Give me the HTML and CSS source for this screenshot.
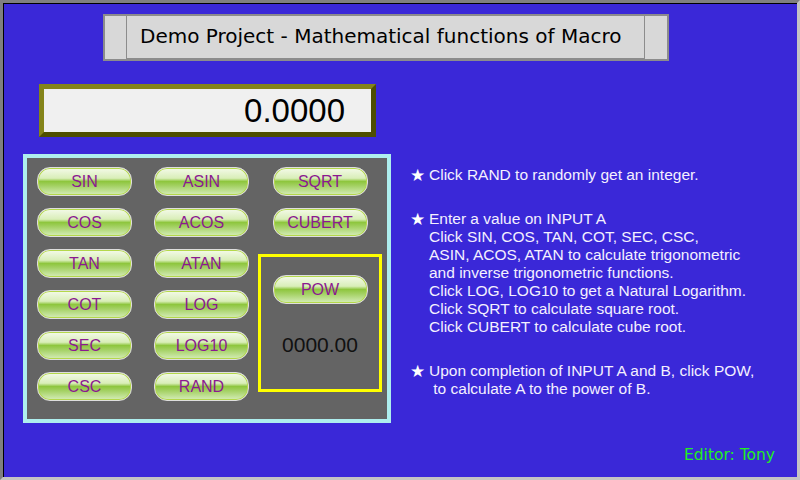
FILE: index.html
```html
<!DOCTYPE html>
<html>
<head>
<title>Demo Project - Mathematical functions of Macro</title>
<link rel="stylesheet" href="styles.css">
</head>
<body>
<div class="screen">
	<div class="title"><div class="title-label">Demo Project - Mathematical functions of Macro</div></div>
	<div class="display">0.0000</div>
	<div class="body">
		<div class="panel">
			<div class="keys">
				<div class="btn">SIN</div><div class="btn">ASIN</div>
				<div class="btn">COS</div><div class="btn">ACOS</div>
				<div class="btn">TAN</div><div class="btn">ATAN</div>
				<div class="btn">COT</div><div class="btn">LOG</div>
				<div class="btn">SEC</div><div class="btn">LOG10</div>
				<div class="btn">CSC</div><div class="btn">RAND</div>
			</div>
			<div class="side">
				<div class="btn">SQRT</div>
				<div class="btn">CUBERT</div>
				<div class="pow-box">
					<div class="btn">POW</div>
					<div class="pow-result">0000.00</div>
				</div>
			</div>
		</div>
		<div class="notes">
			<div class="note"><span class="star">★</span><div>Click RAND to randomly get an integer.</div></div>
			<div class="note"><span class="star">★</span><div>Enter a value on INPUT A<br>Click SIN, COS, TAN, COT, SEC, CSC,<br>ASIN, ACOS, ATAN to calculate trigonometric<br>and inverse trigonometric functions.<br>Click LOG, LOG10 to get a Natural Logarithm.<br>Click SQRT to calculate square root.<br>Click CUBERT to calculate cube root.</div></div>
			<div class="note"><span class="star">★</span><div>Upon completion of INPUT A and B, click POW,<br>&nbsp;to calculate A to the power of B.</div></div>
		</div>
	</div>
	<div class="footer">Editor: Tony</div>
</div>
</body>
</html>
```

FILE: styles.css
```css
body { margin: 0; font-family: "Liberation Sans", Arial, sans-serif; }
.screen { width: 800px; height: 480px; box-sizing: border-box; background: #3a28d8; border: 3px solid; border-color: #808080 #c4c4c4 #c4c4c4 #808080; box-shadow: inset 1px 1px 0 #000; display: flex; flex-direction: column; }

.title { align-self: flex-start; margin: 11px 0 0 100px; width: 519px; height: 43px; background: #d8d8d8; border: 2px solid #8c8c8c; padding: 0 22px 0 21px; display: flex; }
.title-label { flex: 1; border: 1px solid #8c8c8c; border-top: 0; padding-left: 13px; font-family: "Comic Sans MS", "DejaVu Sans", sans-serif; font-size: 20px; line-height: 41px; color: #000; white-space: nowrap; }

.display { align-self: flex-start; margin: 23px 0 0 36px; width: 301px; height: 43px; padding-right: 26px; background: #f0f0f0; border: 5px solid; border-color: #84841a #4e4e00 #4e4e00 #84841a; text-align: right; font-size: 33px; line-height: 43px; color: #000; }

.body { display: flex; margin: 17px 0 0 20px; }
.panel { display: flex; width: 350px; height: 252px; padding: 9px 0 0 10px; background: #646464; border: 4px solid #aeeeee; }
.keys { display: grid; grid-template-columns: 95px 95px; grid-auto-rows: 29px; gap: 12px 22px; align-content: start; }
.side { display: flex; flex-direction: column; align-items: center; gap: 12px; margin-left: 9px; width: 124px; }
.pow-box { display: flex; flex-direction: column; align-items: center; box-sizing: border-box; width: 124px; height: 138px; margin-top: 5px; padding-top: 18px; border: 3px solid #ffff00; }
.pow-result { margin-top: 29px; font-size: 21px; line-height: 24px; color: #111; }

.btn { box-sizing: border-box; width: 95px; height: 29px; border: 1px solid #dedede; border-radius: 13px; box-shadow: inset 0 0 0 1px #b4d84a; background: linear-gradient(to bottom, #f4faea 0%, #d9eeb8 38%, #8ec63e 50%, #a4d164 66%, #d6edba 100%); color: #8b1a90; font-size: 16px; line-height: 27px; text-align: center; }

.notes { margin: 12px 0 0 19px; color: #f4f0ff; font-size: 15.5px; line-height: 18px; }
.note { display: flex; margin-bottom: 26px; }
.star { width: 19px; flex: none; font-family: "DejaVu Sans", sans-serif; font-size: 17px; line-height: 18px; color: #fff; }

.footer { margin: auto 22px 13px 0; align-self: flex-end; font-family: "Comic Sans MS", "DejaVu Sans", sans-serif; font-size: 15.5px; line-height: 18px; color: #22ee22; }
```
